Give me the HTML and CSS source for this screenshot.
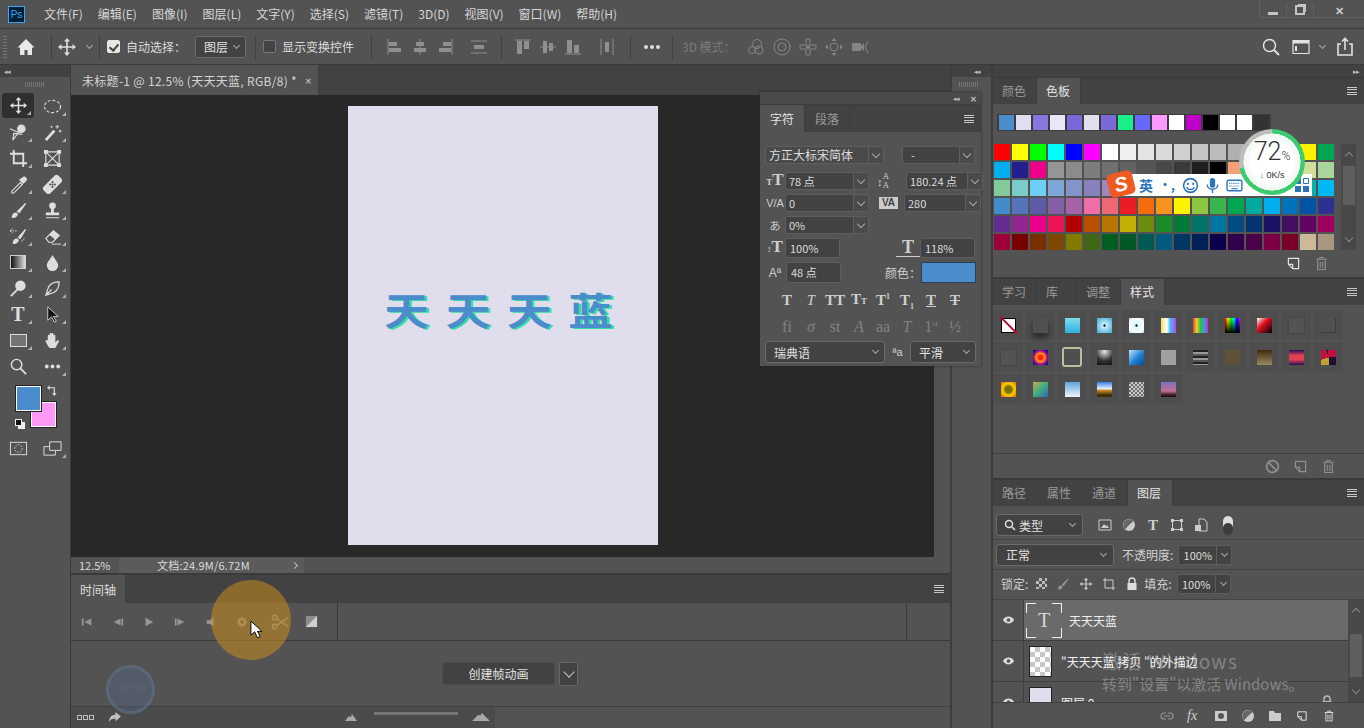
FILE: index.html
```html
<!DOCTYPE html>
<html lang="zh-CN">
<head>
  <meta charset="UTF-8">
  <title>Photoshop</title>
  <link rel="stylesheet" href="styles.css">
</head>
<body>

<svg class="defs">
  <symbol id="move" viewBox="0 0 20 20"><path d="M10 3v14M3 10h14" fill="none" stroke="currentColor" stroke-width="1.6"/><path d="M10 1l3 3.5H7zM10 19l3-3.5H7zM1 10l3.5-3v6zM19 10l-3.5-3v6z" fill="currentColor"/></symbol>
  <symbol id="trash" viewBox="0 0 20 20"><path d="M4 5h12M8 5V3h4v2M5.500 5v12h9V5M8.500 8v7M11.500 8v7" fill="none" stroke="currentColor" stroke-width="1.300"/></symbol>
  <symbol id="newdoc" viewBox="0 0 20 20"><path d="M4 4h12v12H9l-5-5zM4 11h5v5" fill="none" stroke="currentColor" stroke-width="1.400"/></symbol>
  <symbol id="brush" viewBox="0 0 20 20"><path d="M8 11L17 2l1 1-7 10z" fill="currentColor"/><path d="M3 18c0-3 1-6 4-6 2 0 3 2 2 3-1 2-3 3-6 3z" fill="currentColor"/></symbol>
  <symbol id="dots" viewBox="0 0 20 20"><circle cx="4" cy="10" r="2" fill="currentColor"/><circle cx="10" cy="10" r="2" fill="currentColor"/><circle cx="16" cy="10" r="2" fill="currentColor"/></symbol>
</svg>

<div class="app">

  <!-- 菜单栏 -->
  <header class="menubar">
    <div class="ps-logo">Ps</div>
    <nav class="menu">
      <span>文件(F)</span><span>编辑(E)</span><span>图像(I)</span><span>图层(L)</span><span>文字(Y)</span><span>选择(S)</span><span>滤镜(T)</span><span>3D(D)</span><span>视图(V)</span><span>窗口(W)</span><span>帮助(H)</span>
    </nav>
    <div class="winbtns">
      <span class="winbtn"><i class="win-min"></i></span>
      <span class="winbtn"><i class="win-max"></i></span>
      <span class="winbtn win-close">✕</span>
    </div>
  </header>

  <!-- 选项栏 -->
  <div class="optbar">
    <div class="grip-v"></div>
    <div class="opt opt-home">
      <svg class="ic" viewBox="0 0 20 20"><path d="M10 2L1.500 10.500H4V18h4.500v-5h3v5H16v-7.500h2.500z" fill="#e8e8e8"/></svg>
    </div>
    <div class="opt opt-move">
      <svg class="ic"><use href="#move"/></svg>
      <i class="chev"></i>
    </div>
    <div class="opt opt-auto">
      <i class="check on"></i>
      <span>自动选择：</span>
      <span class="sel sel-layer">图层<i class="chev"></i></span>
    </div>
    <div class="opt opt-transform">
      <i class="check"></i>
      <span>显示变换控件</span>
    </div>
    <div class="opt opt-align">
      <svg class="ic dim" viewBox="0 0 20 20"><path d="M3 2v16" stroke="currentColor"/><path d="M4 5h8v4H4zM4 11h12v4H4z" fill="currentColor"/></svg>
      <svg class="ic dim" viewBox="0 0 20 20"><path d="M10 2v16" stroke="currentColor"/><path d="M6 5h8v4H6zM4 11h12v4H4z" fill="currentColor"/></svg>
      <svg class="ic dim" viewBox="0 0 20 20"><path d="M17 2v16" stroke="currentColor"/><path d="M8 5h8v4H8zM4 11h12v4H4z" fill="currentColor"/></svg>
      <svg class="ic dim push" viewBox="0 0 20 20"><path d="M2 4h16M2 16h16" stroke="currentColor"/><path d="M5 8h10v4H5z" fill="currentColor"/></svg>
    </div>
    <div class="opt opt-align2">
      <svg class="ic dim" viewBox="0 0 20 20"><path d="M2 3h16" stroke="currentColor"/><path d="M4 4h5v13H4zM11 4h5v8h-5z" fill="currentColor"/></svg>
      <svg class="ic dim" viewBox="0 0 20 20"><path d="M2 10h16" stroke="currentColor"/><path d="M5 4h4v12H5zM11 6h4v8h-4z" fill="currentColor"/></svg>
      <svg class="ic dim" viewBox="0 0 20 20"><path d="M2 17h16" stroke="currentColor"/><path d="M4 3h5v13H4zM11 8h5v8h-5z" fill="currentColor"/></svg>
      <svg class="ic dim push" viewBox="0 0 20 20"><path d="M4 2v16M16 2v16" stroke="currentColor"/><path d="M8 5h4v10H8z" fill="currentColor"/></svg>
    </div>
    <div class="opt opt-more">
      <svg class="ic"><use href="#dots"/></svg>
    </div>
    <div class="opt opt-3d">
      <span>3D 模式：</span>
      <svg class="ic" viewBox="0 0 20 20"><circle cx="11" cy="7" r="4.500" fill="none" stroke="currentColor"/><circle cx="6" cy="13" r="3.500" fill="none" stroke="currentColor"/><circle cx="13" cy="13" r="4" fill="none" stroke="currentColor"/></svg>
      <svg class="ic" viewBox="0 0 20 20"><circle cx="10" cy="10" r="8" fill="none" stroke="currentColor"/><circle cx="10" cy="10" r="4" fill="none" stroke="currentColor"/></svg>
      <svg class="ic" viewBox="0 0 20 20"><path d="M8 2h4v6h6v4h-6v6H8v-6H2V8h6z" fill="none" stroke="currentColor"/><circle cx="10" cy="10" r="2" fill="currentColor"/></svg>
      <svg class="ic" viewBox="0 0 20 20"><circle cx="10" cy="10" r="4" fill="none" stroke="currentColor"/><path d="M10 1l2.500 3h-5zM10 19l2.500-3h-5zM1 10l3-2.500v5zM19 10l-3-2.500v5z" fill="currentColor"/></svg>
      <svg class="ic" viewBox="0 0 20 20"><path d="M2 6h9v8H2zM11 9l3-3v8l-3-3" fill="currentColor"/><path d="M18 4l-3 6 3 6" fill="none" stroke="currentColor"/></svg>
    </div>
    <div class="opt-right">
      <svg class="ic lit" viewBox="0 0 20 20"><circle cx="8.500" cy="8.500" r="6" fill="none" stroke="currentColor" stroke-width="1.500"/><path d="M13 13l5 5" stroke="currentColor" stroke-width="2"/></svg>
      <svg class="ic lit" viewBox="0 0 20 20"><path d="M2 3.500h16v13H2z" fill="none" stroke="currentColor" stroke-width="1.200"/><path d="M2 3.500h16v3H2zM4 9h2v5H4z" fill="currentColor"/></svg>
      <i class="chev"></i>
      <svg class="ic lit" viewBox="0 0 20 20"><path d="M6 7H3v11h14V7h-3M10 13V2M7 4.500l3-3 3 3" fill="none" stroke="currentColor" stroke-width="1.600"/></svg>
    </div>
  </div>

  <div class="workspace">

    <!-- 工具栏 -->
    <aside class="toolbar">
      <div class="dock-head"><span class="arrows">◂◂</span></div>
      <div class="grip-h"></div>
      <div class="tools">
        <div class="tool sel-tool fly"><svg class="ic"><use href="#move"/></svg></div>
        <div class="tool fly"><svg class="ic" viewBox="0 0 20 20"><ellipse cx="10" cy="10" rx="8.500" ry="6.500" fill="none" stroke="currentColor" stroke-width="1.200" stroke-dasharray="3 2"/></svg></div>
        <div class="tool fly"><svg class="ic" viewBox="0 0 20 20"><path d="M1 6l9 4-6 8 1-7 9 1" fill="none" stroke="currentColor" stroke-width="1.200"/><circle cx="13" cy="6" r="4.500" fill="currentColor"/></svg></div>
        <div class="tool fly"><svg class="ic" viewBox="0 0 20 20"><path d="M3 18L12 8" stroke="currentColor" stroke-width="3"/><path d="M15 2v4M13 4h4M18 7v3M16.500 8.500h3M9 3v2M8 4h2" stroke="currentColor"/></svg></div>
        <div class="tool fly"><svg class="ic" viewBox="0 0 20 20"><path d="M5 1v14h14M1 5h14v14" fill="none" stroke="currentColor" stroke-width="2"/></svg></div>
        <div class="tool"><svg class="ic" viewBox="0 0 20 20"><path d="M3 3h14v14H3zM3 3l14 14M17 3L3 17" fill="none" stroke="currentColor" stroke-width="1.200"/><path d="M1 1h4v4H1zM15 1h4v4h-4zM1 15h4v4H1zM15 15h4v4h-4z" fill="currentColor"/></svg></div>
        <div class="tool fly"><svg class="ic" viewBox="0 0 20 20"><path d="M3 17l9-9 2 2-9 9H3z" fill="none" stroke="currentColor" stroke-width="1.200"/><path d="M10.500 5l4.500 4.500 3-3a2.500 2.500 0 0 0-4-4z" fill="currentColor"/></svg></div>
        <div class="tool fly"><svg class="ic" viewBox="0 0 20 20"><rect x="5" y="-1" width="10" height="22" rx="3" transform="rotate(45 10 10)" fill="currentColor"/><g fill="#555"><circle cx="10" cy="10" r="1.100"/><circle cx="7.500" cy="10" r="1.100"/><circle cx="12.500" cy="10" r="1.100"/><circle cx="10" cy="7.500" r="1.100"/><circle cx="10" cy="12.500" r="1.100"/></g></svg></div>
        <div class="tool fly"><svg class="ic"><use href="#brush"/></svg></div>
        <div class="tool fly"><svg class="ic" viewBox="0 0 20 20"><circle cx="10" cy="5" r="3.500" fill="currentColor"/><path d="M8.500 7h3v5h-3zM3 12h14v3H3zM3 17h14v1.200H3z" fill="currentColor"/></svg></div>
        <div class="tool fly"><svg class="ic" viewBox="0 0 20 20"><path d="M9 11l8-9 1 1-6 10z" fill="currentColor"/><path d="M4 18c0-3 1-6 4-6 2 0 3 2 2 3-1 2-3 3-6 3z" fill="currentColor"/><path d="M8 4H1l3-2.500M1 4l3 2.500M13 15a5 5 0 0 0 3-3" fill="none" stroke="currentColor" stroke-dasharray="1.500 1"/></svg></div>
        <div class="tool fly"><svg class="ic" viewBox="0 0 20 20"><path d="M3 12l8-8 6 5-7 7H6z" fill="none" stroke="currentColor" stroke-width="1.200"/><path d="M11 4l6 5-4 4-6-5zM9 18h10" fill="currentColor" stroke="currentColor"/></svg></div>
        <div class="tool fly"><i class="grad"></i></div>
        <div class="tool fly"><svg class="ic" viewBox="0 0 20 20"><path d="M10 2c3 5 6 8 6 11a6 6 0 0 1-12 0c0-3 3-6 6-11z" fill="currentColor"/></svg></div>
        <div class="tool fly"><svg class="ic" viewBox="0 0 20 20"><circle cx="12" cy="7" r="5.500" fill="currentColor"/><path d="M9 11l-7 7" stroke="currentColor" stroke-width="2"/></svg></div>
        <div class="tool fly"><svg class="ic" viewBox="0 0 20 20"><path d="M17 3c-5 0-9 2-11 5l-3 9 9-3c3-2 5-6 5-11zM3 17l6-6" fill="none" stroke="currentColor" stroke-width="1.300"/></svg></div>
        <div class="tool fly tool-t">T</div>
        <div class="tool fly"><svg class="ic" viewBox="0 0 20 20"><path d="M5 2v14l4-3.500 3 5.500 2-1-3-5h5z" fill="#111" stroke="#ccc"/></svg></div>
        <div class="tool fly"><i class="rect-ic"></i></div>
        <div class="tool fly"><svg class="ic" viewBox="0 0 20 20"><path d="M5 10V5a1 1 0 0 1 2 0v4V3a1 1 0 0 1 2 0v6V3a1 1 0 0 1 2 0v6V5a1 1 0 0 1 2 0v7l2-2a1 1 0 0 1 1.500 1.500L13 18H8C6 18 5 15 3 11.500a1 1 0 0 1 2-1.500z" fill="currentColor"/></svg></div>
        <div class="tool"><svg class="ic" viewBox="0 0 20 20"><circle cx="8" cy="8" r="5.500" fill="none" stroke="currentColor" stroke-width="1.500"/><path d="M12 12l6 6" stroke="currentColor" stroke-width="2"/></svg></div>
        <div class="tool fly"><svg class="ic"><use href="#dots"/></svg></div>
      </div>
      <div class="colors">
        <i class="col-fg"></i>
        <i class="col-bg"></i>
        <svg class="col-swap" viewBox="0 0 12 12"><path d="M1 3h7v7" fill="none" stroke="#ddd" stroke-width="1.300"/><path d="M0 3l3-2.500v5zM8 12l-2.500-3h5z" fill="#ddd"/></svg>
        <i class="col-def"></i>
      </div>
      <div class="tool-bottom">
        <div class="tool"><svg class="ic" viewBox="0 0 20 20"><rect x="1.500" y="3.500" width="17" height="13" fill="none" stroke="currentColor"/><circle cx="10" cy="10" r="4" fill="none" stroke="currentColor" stroke-dasharray="1.500 1.500"/></svg></div>
        <div class="tool fly"><svg class="ic" viewBox="0 0 20 20"><path d="M7 3h12v9H7zM1 8h6M1 8v9h12v-5" fill="none" stroke="currentColor"/></svg></div>
      </div>
    </aside>

    <!-- 文档区 -->
    <main class="docarea">
      <div class="tabbar">
        <div class="doctab">未标题-1 @ 12.5% (天天天蓝, RGB/8) * <span class="tab-x">✕</span></div>
      </div>
      <div class="canvas-row">
        <div class="canvas">
          <div class="paper"><div class="art">天天天蓝</div></div>
        </div>
      </div>
      <div class="statusbar">
        <span class="zoomval">12.5%</span>
        <div class="docinfo"><span>文档:24.9M/6.72M</span><i class="chev-r"></i></div>
      </div>
      <section class="timeline">
        <div class="tl-head"><span class="tl-tab">时间轴</span><i class="hamb"></i></div>
        <div class="tl-controls">
          <svg class="tl-ic" viewBox="0 0 14 14"><path d="M1 3h2v8H1zM12 3v8L4 7z" fill="currentColor"/></svg>
          <svg class="tl-ic" viewBox="0 0 14 14"><path d="M10 3v8L2 7zM11 3h2v8h-2z" fill="currentColor"/></svg>
          <svg class="tl-ic" viewBox="0 0 14 14"><path d="M3 2v10l9-5z" fill="currentColor"/></svg>
          <svg class="tl-ic" viewBox="0 0 14 14"><path d="M1 3h2v8H1zM4 3v8l8-4z" fill="currentColor"/></svg>
          <svg class="tl-ic" viewBox="0 0 14 14"><path d="M2 5h3l5-3v10l-5-3H2z" fill="currentColor"/></svg>
          <svg class="tl-ic" viewBox="0 0 14 14"><circle cx="7" cy="7" r="3.500" fill="none" stroke="currentColor" stroke-width="2.500"/><path d="M7 1v2M7 11v2M1 7h2M11 7h2M3 3l1.500 1.500M9.500 9.500L11 11M11 3L9.500 4.500M4.500 9.500L3 11" stroke="currentColor" stroke-width="1.400"/></svg>
          <i class="tl-sep"></i>
          <svg class="tl-ic tl-cut" viewBox="0 0 20 20"><circle cx="4" cy="5" r="2.500" fill="none" stroke="currentColor" stroke-width="1.500"/><circle cx="4" cy="15" r="2.500" fill="none" stroke="currentColor" stroke-width="1.500"/><path d="M6 6l13 9M6 14l13-9" stroke="currentColor" stroke-width="1.500"/></svg>
          <svg class="tl-ic tl-trans" viewBox="0 0 14 14"><path d="M1 1h12v12H1z" fill="#8e8e8e"/><path d="M13 1v12H1z" fill="#d0d0d0"/></svg>
          <i class="tl-sep tl-sep-b"></i>
          <i class="tl-sep tl-sep-c"></i>
        </div>
        <div class="tl-body">
          <span class="btn-anim">创建帧动画</span>
          <span class="btn-drop"><i class="chev chev-big"></i></span>
        </div>
        <div class="tl-foot">
          <span class="frames"><i></i><i></i><i></i></span>
          <svg class="tl-arrow" viewBox="0 0 14 12"><path d="M8 0l6 5-6 5V7C5 7 2 8 1 11 1 7 3 3 8 3z" fill="#c0c0c0"/></svg>
          <div class="tl-zoom">
            <svg class="mtn-s" viewBox="0 0 12 7"><path d="M0 7l4-5 2 1 1-3 5 7z" fill="#a8a8a8"/></svg>
            <i class="slider"></i>
            <svg class="mtn-l" viewBox="0 0 20 9"><path d="M0 9l7-7 2 1 2-3 9 9z" fill="#a8a8a8"/></svg>
          </div>
        </div>
      </section>
    </main>

    <!-- 折叠的面板条 -->
    <div class="dock-strip">
      <div class="dock-head"><span class="arrows">◂◂</span></div>
      <div class="grip-h grip-strip"></div>
    </div>

    <!-- 右侧面板 -->
    <aside class="panels">
      <div class="dock-head dock-head-r"><span class="arrows">▸▸</span></div>

      <section class="panel panel-swatch">
        <div class="ptabs">
          <span class="ptab">颜色</span><span class="ptab on">色板</span><i class="hamb"></i>
        </div>
        <div class="recent" id="recent"></div>
        <div class="swatch-wrap">
          <div class="swatches" id="swatches"></div>
          <div class="vscroll"><i class="up"></i><b></b><i class="dn"></i></div>
        </div>
        <div class="pfoot pfoot-swatch">
          <svg class="ic lit"><use href="#newdoc"/></svg>
          <svg class="ic dim"><use href="#trash"/></svg>
        </div>
      </section>

      <section class="panel panel-style">
        <div class="ptabs">
          <span class="ptab">学习</span><span class="ptab ptab-one">库</span><span class="ptab">调整</span><span class="ptab on">样式</span><i class="hamb"></i>
        </div>
        <div class="styles">
          <div class="cell"><i class="thumb t1"></i></div>
          <div class="cell"><i class="thumb t2"></i></div>
          <div class="cell"><i class="thumb t3"></i></div>
          <div class="cell"><i class="thumb t4"></i></div>
          <div class="cell"><i class="thumb t5"></i></div>
          <div class="cell"><i class="thumb t6"></i></div>
          <div class="cell"><i class="thumb t7"></i></div>
          <div class="cell"><i class="thumb t8"></i></div>
          <div class="cell"><i class="thumb t9"></i></div>
          <div class="cell"><i class="thumb t10"></i></div>
          <div class="cell"><i class="thumb t11"></i></div>
          <div class="cell"><i class="thumb t10"></i></div>
          <div class="cell"><i class="thumb t12"></i></div>
          <div class="cell"><i class="thumb t13"></i></div>
          <div class="cell"><i class="thumb t14"></i></div>
          <div class="cell"><i class="thumb t15"></i></div>
          <div class="cell"><i class="thumb t16"></i></div>
          <div class="cell"><i class="thumb t17"></i></div>
          <div class="cell"><i class="thumb t18"></i></div>
          <div class="cell"><i class="thumb t19"></i></div>
          <div class="cell"><i class="thumb t20"></i></div>
          <div class="cell"><i class="thumb t21"></i></div>
          <div class="cell"><i class="thumb t22"></i></div>
          <div class="cell"><i class="thumb t23"></i></div>
          <div class="cell"><i class="thumb t24"></i></div>
          <div class="cell"><i class="thumb t25"></i></div>
          <div class="cell"><i class="thumb t26"></i></div>
          <div class="cell"><i class="thumb t27"></i></div>
        </div>
        <div class="pfoot pfoot-style">
          <svg class="ic dim" viewBox="0 0 20 20"><circle cx="10" cy="10" r="7" fill="none" stroke="currentColor" stroke-width="2"/><path d="M5 5l10 10" stroke="currentColor" stroke-width="2"/></svg>
          <svg class="ic dim"><use href="#newdoc"/></svg>
          <svg class="ic dim"><use href="#trash"/></svg>
        </div>
      </section>

      <section class="panel panel-layers">
        <div class="ptabs">
          <span class="ptab">路径</span><span class="ptab">属性</span><span class="ptab">通道</span><span class="ptab on">图层</span><i class="hamb"></i>
        </div>
        <div class="lrow lrow-filter">
          <span class="sel sel-filter">
            <svg class="ic12" viewBox="0 0 12 12"><circle cx="5" cy="5" r="3.500" fill="none" stroke="#ddd" stroke-width="1.500"/><path d="M8 8l3 3" stroke="#ddd" stroke-width="1.600"/></svg>类型<i class="chev"></i>
          </span>
          <div class="filter-icons">
            <svg class="ic14" viewBox="0 0 14 14"><path d="M1 2h12v10H1z" fill="none" stroke="#ccc"/><path d="M3 10l3-4 2 2 1-1 2 3z" fill="#ccc"/></svg>
            <svg class="ic14" viewBox="0 0 14 14"><circle cx="7" cy="7" r="6" fill="#ccc"/><path d="M7 7l4.500-4A6 6 0 0 0 3 11.500z" fill="#666"/></svg>
            <span class="filter-t">T</span>
            <svg class="ic14" viewBox="0 0 14 14"><path d="M2.500 2.500h9v9h-9z" fill="none" stroke="#ccc"/><path d="M1 1h3v3H1zM10 1h3v3h-3zM1 10h3v3H1zM10 10h3v3h-3z" fill="#ccc"/></svg>
            <svg class="ic14" viewBox="0 0 14 14"><path d="M5 1h5l3 3v9H5z" fill="none" stroke="#ccc"/><path d="M1 7h6v6H1z" fill="#ccc"/></svg>
            <i class="toggle"></i>
          </div>
        </div>
        <div class="lrow lrow-blend">
          <span class="sel sel-blend">正常<i class="chev"></i></span>
          <span class="lab">不透明度:</span>
          <span class="combo"><b>100%</b><i class="chev"></i></span>
        </div>
        <div class="lrow lrow-lock">
          <span class="lab">锁定:</span>
          <div class="lock-icons">
            <i class="lock-check"></i>
            <svg class="ic14 faded"><use href="#brush"/></svg>
            <svg class="ic14"><use href="#move"/></svg>
            <svg class="ic14" viewBox="0 0 14 14"><path d="M3 1v10h10M1 3h10v10" fill="none" stroke="#ccc"/></svg>
            <svg class="ic14" viewBox="0 0 14 14"><path d="M4 6V4a3 3 0 0 1 6 0v2" fill="none" stroke="#ddd" stroke-width="1.400"/><path d="M2.500 6h9v7h-9z" fill="#ddd"/></svg>
          </div>
          <span class="lab">填充:</span>
          <span class="combo"><b>100%</b><i class="chev"></i></span>
        </div>
        <div class="layers">
          <div class="layer-list">
            <div class="layer layer-on">
              <svg class="eye" viewBox="0 0 14 10"><path d="M1 5c3-5 9-5 12 0-3 5-9 5-12 0z" fill="#ddd"/><circle cx="7" cy="5" r="2" fill="#555"/></svg>
              <div class="lmain">
                <div class="thumb-t">T</div>
                <span class="lname">天天天蓝</span>
              </div>
            </div>
            <div class="layer">
              <svg class="eye" viewBox="0 0 14 10"><path d="M1 5c3-5 9-5 12 0-3 5-9 5-12 0z" fill="#ddd"/><circle cx="7" cy="5" r="2" fill="#555"/></svg>
              <div class="lmain">
                <div class="thumb-c"></div>
                <span class="lname lname-b">"天天天蓝 拷贝 "的外描边</span>
              </div>
            </div>
            <div class="layer">
              <svg class="eye" viewBox="0 0 14 10"><path d="M1 5c3-5 9-5 12 0-3 5-9 5-12 0z" fill="#ddd"/><circle cx="7" cy="5" r="2" fill="#555"/></svg>
              <div class="lmain">
                <div class="thumb-p"></div>
                <span class="lname lname-b">图层 0</span>
                <svg class="ic14 llock" viewBox="0 0 14 14"><path d="M4 6V4a3 3 0 0 1 6 0v2" fill="none" stroke="#bbb" stroke-width="1.400"/><path d="M2.500 6h9v7h-9z" fill="#bbb"/></svg>
              </div>
            </div>
          </div>
          <div class="vscroll vscroll-l"><i class="up"></i><b></b><i class="dn"></i></div>
        </div>
        <div class="lfoot">
          <svg class="ic14 faded" viewBox="0 0 14 14"><path d="M6 4H4a3 3 0 0 0 0 6h2M8 4h2a3 3 0 0 1 0 6H8M4 7h6" fill="none" stroke="#ccc" stroke-width="1.200"/></svg>
          <span class="fx">fx</span>
          <svg class="ic14" viewBox="0 0 14 14"><path d="M1 2h12v10H1z" fill="#ccc"/><circle cx="7" cy="7" r="3" fill="#555"/></svg>
          <svg class="ic14" viewBox="0 0 14 14"><circle cx="7" cy="7" r="6" fill="#ccc"/><path d="M7 7l4.500-4A6 6 0 0 0 3 11.500z" fill="#666"/></svg>
          <svg class="ic14" viewBox="0 0 14 14"><path d="M1 2h5l1 2h6v8H1z" fill="#ccc"/></svg>
          <svg class="ic14 lit"><use href="#newdoc"/></svg>
          <svg class="ic14 lit"><use href="#trash"/></svg>
        </div>
      </section>
    </aside>
  </div>

  <!-- 浮动的字符面板 -->
  <div class="charpanel">
    <div class="cp-head"><span class="arrows">◂◂</span><span class="cp-x">✕</span></div>
    <div class="ptabs cp-tabs">
      <span class="ptab on">字符</span><span class="ptab">段落</span><i class="hamb"></i>
    </div>
    <div class="cp-body">
      <div class="cp-row cp-r1">
        <span class="cf w118">方正大标宋简体<em></em></span>
        <span class="cf w72 dark">-<em></em></span>
      </div>
      <div class="cp-row cp-r2">
        <span class="ci ci-tt"><small>T</small>T</span>
        <span class="cf w84">78 点<em></em></span>
        <span class="ci ci-lead"><b>↕</b><span>A<br>A</span></span>
        <span class="cf w77">180.24 点<em></em></span>
      </div>
      <div class="cp-row cp-r3">
        <span class="ci ci-va">V/A</span>
        <span class="cf w84">0<em></em></span>
        <span class="ci ci-vab">VA</span>
        <span class="cf w77">280<em></em></span>
      </div>
      <div class="cp-row cp-r4">
        <span class="ci ci-jp">あ</span>
        <span class="cf w84">0%<em></em></span>
      </div>
      <div class="cp-row cp-r5">
        <span class="ci ci-tt"><small>↕</small>T</span>
        <span class="cf w55">100%</span>
        <span class="ci ci-wide">T</span>
        <span class="cf w55">118%</span>
      </div>
      <div class="cp-row cp-r6">
        <span class="ci ci-base">Aª</span>
        <span class="cf w55">48 点</span>
        <span class="cp-lab">颜色：</span>
        <i class="cp-color"></i>
      </div>
      <div class="cp-types">
        <span class="b">T</span><span class="i">T</span><span class="b">TT</span><span class="b">T<small>T</small></span><span class="b">T<sup>1</sup></span><span class="b">T<sub>1</sub></span><span class="b u">T</span><span class="b s">T</span>
      </div>
      <div class="cp-types cp-lig">
        <span>fi</span><span class="i">σ</span><span>st</span><span class="i">A</span><span>aa</span><span class="i">T</span><span>1<sup>st</sup></span><span>½</span>
      </div>
      <div class="cp-row cp-r9">
        <span class="sel sel-lang">瑞典语<i class="chev"></i></span>
        <span class="cp-aa">ªa</span>
        <span class="sel sel-aa">平滑<i class="chev"></i></span>
      </div>
    </div>
  </div>

  <!-- 搜狗输入法和网速浮窗 -->
  <div class="ime">
    <span class="ime-s">S</span>
    <span class="ime-t">英</span>
    <span class="ime-t ime-p">•,</span>
    <svg class="ime-ic" viewBox="0 0 16 16"><circle cx="8" cy="8" r="6.500" fill="none" stroke="#2b74b8" stroke-width="1.500"/><circle cx="5.500" cy="6.500" r="1" fill="#2b74b8"/><circle cx="10.500" cy="6.500" r="1" fill="#2b74b8"/><path d="M4.500 9.500c1 3 6 3 7 0" fill="none" stroke="#2b74b8" stroke-width="1.300"/></svg>
    <svg class="ime-ic" viewBox="0 0 16 16"><rect x="5.500" y="1" width="5" height="9" rx="2.500" fill="#2b74b8"/><path d="M3 7c0 6 10 6 10 0M8 12v3" fill="none" stroke="#2b74b8" stroke-width="1.300"/></svg>
    <svg class="ime-ic" viewBox="0 0 16 16"><rect x="1" y="3" width="14" height="10" rx="1.500" fill="none" stroke="#2b74b8" stroke-width="1.300"/><path d="M3 6h10M3 8.500h10" stroke="#2b74b8" stroke-dasharray="1 1"/><path d="M5 11h6" stroke="#2b74b8"/></svg>
    <svg class="ime-grid" viewBox="0 0 14 14"><path d="M0 0h6v6H0zM0 8h6v6H0zM8 8h6v6H8z" fill="#2b74b8"/><path d="M8.500.5h5v5h-5z" fill="none" stroke="#2b74b8"/></svg>
  </div>
  <div class="speed">
    <div class="speed-pct">72<small>%</small></div>
    <div class="speed-net"><b>↓</b> 0K/s</div>
  </div>

  <!-- 录屏光标和计时 -->
  <div class="click-spot"></div>
  <svg class="cursor" viewBox="0 0 14 20"><path d="M1 1v15l4-3.500L8 19l3-1.500-3-5.500h5z" fill="#fff" stroke="#000"/></svg>
  <div class="rec-time">02:58</div>

  <div class="watermark">
    <div class="wm-a">激活 Windows</div>
    <div class="wm-b">转到"设置"以激活 Windows。</div>
  </div>
</div>

<script>
  const recent = ["#4a8ccc","#e0def0","#8677e0","#e8e6f8","#7868d8","#e2e0ee","#7a6ad8","#1af08a","#6868ff","#ff99ff","#ffffff","#c000c8","#000000","#ffffff","#ffffff","#333333"];
  const colors = [
    "#ff0000","#ffff00","#00ff00","#00ffff","#0000ff","#ff00ff","#ffffff","#efefef","#e3e3e3","#dadada","#d0d0d0","#c6c6c6","#bcbcbc","#b0b0b0","#a4a4a4","#9a9a9a","#f4f0d0","#fff200","#00a651",
    "#00aeef","#21208c","#ec008c","#959595","#8b8b8b","#7d7d7d","#707070","#636363","#555555","#484848","#3a3a3a","#1f1f1f","#000000","#f4a07a","#fbad82","#fdc68c","#fff799","#cfe09a","#a8d59c",
    "#82ca9c","#7accc8","#6dcff6","#7da7d8","#8493ca","#8781bd","#a186be","#bc8cbf","#f49ac2","#f5989d","#f9ad81","#fdc68a","#fff799","#c4df9b","#a3d39c","#82ca9d","#7bcdc9","#00b5b0","#00b9f2",
    "#438ccb","#5574b9","#5e5ca7","#855fa8","#a763a8","#ef6ea8","#ef6674","#ed1c24","#f26c0d","#f7941d","#fff200","#8dc63f","#39b54a","#00a651","#00a99d","#00aeef","#0072bc","#0054a6","#2e3192",
    "#662d91","#92278f","#ec008c","#ed145b","#b20000","#b45000","#ba7500","#c4b000","#6e8b10","#1a8a2a","#007a36","#00746b","#0076a3","#004b80","#003471","#1b1464","#440e62","#630460","#9e005d",
    "#9e0039","#790000","#7b2e00","#7d4900","#827b00","#406618","#005e20","#005826","#005952","#005b7f","#003663","#002157","#0d004c","#32004b","#4b0049","#7b0046","#7a0026","#cdb99a","#a89780"
  ];

  function fill(id, list) {
    const box = document.getElementById(id);
    list.forEach(c => {
      const el = document.createElement("i");
      el.style.background = c;
      box.appendChild(el);
    });
  }

  fill("recent", recent);
  fill("swatches", colors);
</script>

</body>
</html>
```

FILE: styles.css
```css
* {
  box-sizing: border-box;
}

html, body {
  margin: 0;
  height: 100%;
  overflow: hidden;
}

body {
  font-family: "Noto Sans CJK SC", "Noto Sans", sans-serif;
  font-size: 12px;
  color: #dcdcdc;
  background: #535353;
}

i, em {
  display: block;
  font-style: normal;
}

.defs {
  display: none;
}

.app {
  position: relative;
  width: 1364px;
  height: 728px;
  overflow: hidden;
}

.ic {
  width: 20px;
  height: 20px;
  flex: none;
  color: #dedede;
}

.ic12 {
  width: 12px;
  height: 12px;
  flex: none;
}

.ic14 {
  width: 14px;
  height: 14px;
  flex: none;
  color: #cfcfcf;
}

.dim {
  color: #8f8f8f;
}

.lit {
  color: #e2e2e2;
}

.faded {
  opacity: 0.55;
}

.chev {
  width: 5px;
  height: 5px;
  flex: none;
  border-right: 1px solid #a8a8a8;
  border-bottom: 1px solid #a8a8a8;
  transform: rotate(45deg);
}

/* menu */
.menubar {
  display: flex;
  align-items: center;
  height: 29px;
  padding-left: 8px;
  border-bottom: 1px solid #3a3a3a;
}

.ps-logo {
  width: 17px;
  height: 17px;
  margin-right: 19px;
  border: 1px solid #31a8ff;
  background: #001e36;
  color: #31a8ff;
  font: 10px/15px "Liberation Sans", sans-serif;
  text-align: center;
}

.menu {
  display: flex;
  gap: 15px;
  color: #d6d6d6;
  line-height: 28px;
}

.winbtns {
  display: flex;
  margin-left: auto;
  align-self: flex-start;
  height: 18px;
  padding-top: 3px;
  border: 1px solid #626262;
  border-top: 0;
  border-right: 0;
  border-radius: 0 0 0 3px;
}

.winbtn {
  display: flex;
  align-items: center;
  justify-content: center;
  width: 27px;
  border-right: 1px solid #626262;
}

.winbtn:last-child {
  width: 50px;
  border-right: 0;
}

.win-min {
  width: 10px;
  height: 3px;
  margin-top: 6px;
  background: #c4c4c4;
}

.win-max {
  width: 10px;
  height: 10px;
  border: 2px solid #c4c4c4;
  box-shadow: 2px -2px 0 -1px #c4c4c4;
}

.win-close {
  color: #c8c8c8;
  font-size: 11px;
  font-weight: bold;
}

/* options */
.optbar {
  display: flex;
  align-items: center;
  height: 36px;
  padding-left: 3px;
  border-bottom: 1px solid #3a3a3a;
}

.grip-v {
  width: 4px;
  height: 22px;
  background: repeating-linear-gradient(#777 0 1px, transparent 1px 3px);
}

.opt {
  display: flex;
  align-items: center;
  height: 24px;
  border-right: 1px solid #414141;
}

.opt-home {
  width: 45px;
  padding-left: 9px;
}

.opt-move {
  width: 48px;
  padding-left: 5px;
  gap: 10px;
}

.opt-move .chev {
  margin-top: -3px;
}

.opt-auto {
  width: 156px;
  padding-left: 7px;
}

.check {
  width: 13px;
  height: 13px;
  flex: none;
  border: 1px solid #777;
  border-radius: 2px;
  background: #434343;
  margin-right: 6px;
}

.check.on {
  position: relative;
  background: #e6e6e6;
  border-color: #e6e6e6;
}

.check.on::after {
  content: "";
  position: absolute;
  left: 3px;
  top: 1px;
  width: 4px;
  height: 7px;
  border-right: 2px solid #444;
  border-bottom: 2px solid #444;
  transform: rotate(40deg);
}

.sel {
  display: flex;
  align-items: center;
  justify-content: space-between;
  height: 22px;
  padding: 0 6px 0 8px;
  border: 1px solid #6a6a6a;
  border-radius: 3px;
  background: #424242;
  color: #e0e0e0;
}

.sel .chev {
  margin-top: -3px;
}

.sel-layer {
  width: 51px;
  margin-left: 9px;
}

.opt-transform {
  width: 116px;
  padding-left: 7px;
}

.opt-align {
  width: 130px;
  padding-left: 13px;
  gap: 5px;
}

.opt-align2 {
  width: 129px;
  padding-left: 11px;
  gap: 5px;
}

.push {
  margin-left: 9px;
}

.opt-more {
  width: 42px;
  padding-left: 11px;
}

.opt-3d {
  border: 0;
  padding-left: 9px;
  color: #7a7a7a;
  gap: 6px;
}

.opt-3d span {
  width: 58px;
}

.opt-3d .ic {
  color: #858585;
}

.opt-right {
  display: flex;
  align-items: center;
  margin-left: auto;
  padding-right: 9px;
}

.opt-right .ic + .ic {
  margin-left: 10px;
}

.opt-right .chev {
  margin: -3px 10px 0 9px;
}

/* workspace */
.workspace {
  display: grid;
  grid-template-columns: 71px 881px 41px 371px;
  height: 663px;
}

.dock-head {
  display: flex;
  align-items: center;
  height: 12px;
  padding-left: 4px;
  background: #424242;
}

.arrows {
  font-size: 7px;
  line-height: 12px;
  letter-spacing: -1px;
  color: #bdbdbd;
}

.grip-h {
  width: 20px;
  height: 5px;
  margin: 5px auto 6px;
  background: repeating-linear-gradient(90deg, #747474 0 1px, transparent 1px 2px);
}

/* toolbar */
.toolbar {
  border-right: 1px solid #3a3a3a;
}

.tools,
.tool-bottom {
  display: grid;
  grid-template-columns: 34px 34px;
  grid-auto-rows: 26px;
  padding-left: 1px;
}

.tool {
  position: relative;
  display: flex;
  align-items: center;
  justify-content: center;
  color: #dedede;
}

.tool .ic {
  width: 19px;
  height: 19px;
}

.fly::after {
  content: "";
  position: absolute;
  right: 3px;
  bottom: 3px;
  border-left: 4px solid transparent;
  border-bottom: 4px solid #b0b0b0;
}

.sel-tool {
  background: #2f2f2f;
  border-radius: 3px;
  margin: 0 1px 1px;
}

.grad {
  width: 16px;
  height: 14px;
  border: 1px solid #ccc;
  background: linear-gradient(90deg, #111, #ddd);
}

.rect-ic {
  width: 17px;
  height: 13px;
  border: 1px solid #ddd;
  background: #757575;
}

.tool-t {
  font: bold 20px "Liberation Serif", serif;
}

.colors {
  position: relative;
  height: 51px;
  margin-top: 6px;
}

.col-fg,
.col-bg {
  position: absolute;
  width: 25px;
  height: 25px;
  border: 1px solid #fff;
  box-shadow: 0 0 0 1px #222;
}

.col-fg {
  left: 16px;
  top: 1px;
  background: #4a8ccc;
  z-index: 1;
}

.col-bg {
  left: 31px;
  top: 17px;
  background: #ff99f5;
}

.col-swap {
  position: absolute;
  left: 47px;
  top: 0;
  width: 11px;
  height: 11px;
}

.col-def {
  position: absolute;
  left: 15px;
  top: 34px;
  width: 7px;
  height: 7px;
  background: #111;
  border: 1px solid #eee;
  box-shadow: 3px 3px 0 0 #eee;
}

.tool-bottom {
  margin-top: -1px;
}

/* document */
.docarea {
  display: flex;
  flex-direction: column;
  border-right: 2px solid #3d3d3d;
}

.tabbar {
  height: 30px;
  padding-top: 0;
  background: #424242;
}

.doctab {
  display: flex;
  align-items: center;
  width: 247px;
  height: 30px;
  padding-left: 11px;
  background: #535353;
  color: #d4d4d4;
  letter-spacing: 0.3px;
  white-space: pre;
}

.tab-x {
  margin-left: 5px;
  color: #b4b4b4;
  font-size: 8px;
  font-weight: bold;
}

.canvas-row {
  height: 462px;
  padding-right: 16px;
}

.canvas {
  display: flex;
  justify-content: center;
  height: 100%;
  padding-top: 11px;
  background: #282828;
}

.paper {
  display: flex;
  align-items: center;
  justify-content: center;
  width: 310px;
  height: 439px;
  background: #e0deed;
}

.art {
  margin: 0 0 34px 10px;
  transform: scaleX(1.18);
  font-size: 38px;
  line-height: 1;
  font-weight: 700;
  letter-spacing: 14px;
  white-space: nowrap;
  color: #4a8ccc;
  text-shadow: 2px 1px 0 #38dca0;
}

.statusbar {
  display: flex;
  align-items: center;
  height: 16px;
  padding-left: 8px;
  font-size: 11px;
}

.zoomval {
  width: 40px;
}

.docinfo {
  display: flex;
  align-items: center;
  justify-content: space-between;
  width: 185px;
  height: 15px;
  padding: 0 7px 0 38px;
  background: #5b5b5b;
  letter-spacing: 0.2px;
}

.chev-r {
  width: 5px;
  height: 5px;
  border-right: 1px solid #bbb;
  border-top: 1px solid #bbb;
  transform: rotate(45deg);
}

/* timeline */
.timeline {
  position: relative;
  flex: 1;
  display: flex;
  flex-direction: column;
  border-top: 2px solid #3a3a3a;
}

.hamb {
  width: 10px;
  height: 8px;
  margin-left: auto;
  flex: none;
  background: repeating-linear-gradient(#c8c8c8 0 1px, transparent 1px 2.34px);
}

.tl-head {
  display: flex;
  align-items: center;
  height: 28px;
  padding-right: 6px;
  background: #424242;
}

.tl-tab {
  display: flex;
  align-items: center;
  height: 100%;
  padding: 0 9px;
  background: #535353;
}

.tl-controls {
  position: relative;
  display: flex;
  align-items: center;
  height: 38px;
  padding-left: 10px;
  gap: 19px;
  border-bottom: 1px solid #3a3a3a;
  color: #969696;
}

.tl-ic {
  width: 12px;
  height: 12px;
  flex: none;
}

.tl-cut {
  width: 18px;
  height: 18px;
  margin-left: 1px;
}

.tl-trans {
  width: 13px;
  height: 13px;
  margin-left: -3px;
}

.tl-sep {
  width: 1px;
  height: 37px;
  margin: 0 -9px 0 -8px;
  background: #474747;
}

.tl-sep-b {
  margin-left: 0;
  background: #3a3a3a;
}

.tl-sep-c {
  margin-left: auto;
  margin-right: 43px;
  background: #3a3a3a;
}

.tl-body {
  display: flex;
  align-items: center;
  justify-content: center;
  gap: 4px;
  height: 65px;
  padding: 0 0 0 79px;
}

.btn-anim {
  display: block;
  width: 113px;
  height: 23px;
  margin-left: 292px;
  margin-right: 0;
  background: #424242;
  border: 1px solid #4d4d4d;
  border-radius: 3px;
  color: #e2e2e2;
  line-height: 21px;
  text-align: center;
}

.btn-drop {
  display: flex;
  align-items: center;
  justify-content: center;
  width: 19px;
  height: 24px;
  margin-right: auto;
  background: #424242;
  border: 1px solid #666;
  border-radius: 2px;
}

.chev-big {
  width: 8px;
  height: 8px;
  margin-top: -4px;
  border-color: #c6c6c6;
}

.tl-foot {
  display: flex;
  align-items: center;
  height: 22px;
  border-top: 1px solid #3f3f3f;
  background: linear-gradient(90deg, #4b4b4b 0 424px, #535353 424px);
  padding-left: 6px;
}

.frames {
  display: flex;
  gap: 1px;
}

.frames i {
  width: 5px;
  height: 5px;
  border: 1px solid #bbb;
}

.tl-arrow {
  width: 13px;
  height: 11px;
  margin-left: 14px;
}

.tl-zoom {
  display: flex;
  align-items: center;
  margin-left: 224px;
}

.mtn-s {
  width: 12px;
  height: 7px;
  margin-top: -1px;
}

.slider {
  width: 84px;
  height: 3px;
  margin: -9px 14px 0 17px;
  background: #757575;
}

.mtn-l {
  width: 18px;
  height: 8px;
  margin-top: -2px;
}

/* dock strip */
.dock-strip {
  border-right: 2px solid #3d3d3d;
}

.dock-strip .dock-head {
  padding-left: 22px;
}

.grip-strip {
  margin-left: 7px;
}

/* right panels */
.panels {
  display: flex;
  flex-direction: column;
}

.dock-head-r {
  justify-content: flex-end;
  padding-right: 5px;
}

.panel {
  flex: none;
  display: flex;
  flex-direction: column;
  border-bottom: 1px solid #3a3a3a;
}

.panel-swatch {
  height: 201px;
}

.panel-style {
  height: 201px;
}

.panel-layers {
  flex: 1;
  border-bottom: 0;
}

.ptabs {
  display: flex;
  align-items: center;
  flex: none;
  height: 27px;
  padding-right: 7px;
  background: #424242;
  border-top: 1px solid #3a3a3a;
}

.ptab {
  display: flex;
  align-items: center;
  height: 100%;
  padding: 0 10px 2px 9px;
  border-right: 1px solid #3d3d3d;
  color: #9a9a9a;
}

.panel-layers .ptab {
  padding-right: 11px;
}

.ptab.on {
  background: #535353;
  color: #e4e4e4;
}

.ptab-one {
  padding: 0 18px 2px 9px;
}

/* swatches */
.recent {
  display: flex;
  align-self: flex-start;
  margin: 10px 0 0 4px;
  padding: 1px 2px;
  background: #3c3c3c;
}

.recent i {
  width: 15px;
  height: 15px;
  margin-right: 2px;
}

.recent i:last-child {
  margin-right: 0;
}

.swatch-wrap {
  display: flex;
  margin-top: 13px;
  padding-left: 1px;
}

.swatches {
  display: grid;
  grid-template-columns: repeat(19, 16px);
  grid-auto-rows: 16px;
  gap: 2px;
  width: 340px;
}

.vscroll {
  display: flex;
  flex-direction: column;
  align-items: center;
  width: 15px;
  margin-left: 7px;
  background: #484848;
}

.vscroll b {
  width: 12px;
  flex: 1;
  margin: 7px 0 30px;
  background: #5f5f5f;
}

.vscroll .up,
.vscroll .dn {
  width: 6px;
  height: 6px;
  border-left: 1px solid #888;
  border-top: 1px solid #888;
  transform: rotate(45deg);
  margin-top: 9px;
}

.vscroll .dn {
  transform: rotate(225deg);
  margin: 0 0 9px;
}

.pfoot {
  display: flex;
  align-items: center;
  justify-content: flex-end;
  flex: 1;
}

.pfoot .ic {
  width: 17px;
  height: 17px;
}

.pfoot-swatch {
  gap: 11px;
  padding-right: 34px;
}

.pfoot-style {
  flex: none;
  height: 25px;
  margin-top: 46px;
  gap: 11px;
  padding-right: 27px;
  border-top: 1px solid #3f3f3f;
}

/* styles */
.styles {
  display: grid;
  grid-template-columns: repeat(11, 30px);
  grid-auto-rows: 30px;
  gap: 2px;
  height: 123px;
  margin-top: 5px;
  padding-left: 0;
}

.cell {
  display: flex;
  align-items: center;
  justify-content: center;
  background: #4e4e4e;
}

.thumb {
  width: 15px;
  height: 15px;
}

.t1 { position: relative; background: #fff; border: 1px solid #000; }
.t1::after { content: ""; position: absolute; left: -6px; top: 5px; width: 25px; height: 2px; background: #b01030; transform: rotate(45deg); }
.t2 { background: #505050; box-shadow: 0 5px 6px #2a2a2a; }
.t3 { background: linear-gradient(#7fdcf0, #30b0e0); }
.t4 { background: radial-gradient(#0e2030 8%, #cdeefa 14%, #3aa8d0); }
.t5 { background: radial-gradient(#0e2030 8%, #d8f4ff 14%, #fff 70%, #8cc8e8); }
.t6 { background: linear-gradient(90deg, #f8e060, #fff 40%, #40c0ff 60%, #c040e0); }
.t7 { background: linear-gradient(90deg, #e04040, #f0d020, #30c040, #30a0e0, #e020c0); }
.t8 { background: linear-gradient(#0000, #000), linear-gradient(90deg, #f00, #ff0, #0f0, #0ff, #00f, #f0f); }
.t9 { background: linear-gradient(135deg, #fff, #e01020 40%, #000); }
.t10 { background: #535353; box-shadow: 0 0 2px #3a3a3a; }
.t11 { background: #505050; border-right: 1px solid #3c3c3c; border-bottom: 1px solid #3c3c3c; }
.t12 { background: radial-gradient(#ff2000 20%, #ffa000 38%, #d0108a 60%, #10109a 82%); }
.t13 { width: 20px; height: 20px; background: #4f4f4f; border: 2px solid #bcbca0; border-radius: 3px; }
.t14 { background: radial-gradient(circle at 50% 10%, #e8e8e8, #333 60%, #111); }
.t15 { background: linear-gradient(135deg, #bde4ff, #1f7fd0 55%, #0a4f9a); }
.t16 { background: #a0a0a0; }
.t17 { background: repeating-linear-gradient(#222 0 2px, #999 2px 4px, #555 4px 6px); }
.t18 { background: #5f5238; }
.t19 { background: linear-gradient(#3f2a10, #9a8a64); }
.t20 { background: linear-gradient(#201060, #e04050 35% 65%, #201060); }
.t21 { background: repeating-conic-gradient(#c01040 0 25%, #201030 0 50%, #c0a030 0 70%); }
.t22 { background: radial-gradient(#7a7000 30%, #ffd000 55%, #e06000); }
.t23 { background: linear-gradient(135deg, #d0a050, #40b080 50%, #3060c0); }
.t24 { background: linear-gradient(#5ea4dc, #eef6ff); }
.t25 { background: linear-gradient(#3080e0, #e8f0ff 45%, #d09020 55%, #40300a 85%); }
.t26 { background: repeating-conic-gradient(#c8c8c8 0 25%, #707070 0 50%) 0 0 / 4px 4px; }
.t27 { background: linear-gradient(#8070c0, #c07090 60%, #402030 85%, #111); }

/* layers */
.lrow {
  display: flex;
  align-items: center;
  flex: none;
  height: 30px;
  border-bottom: 1px solid #424242;
  padding-left: 3px;
}

.lrow-filter {
  height: 34px;
  padding-top: 5px;
}

.lrow-lock {
  padding-bottom: 2px;
}

.sel-filter {
  justify-content: flex-start;
  width: 87px;
  height: 22px;
  padding: 0 7px;
  gap: 3px;
}

.sel-filter .chev {
  margin-left: auto;
}

.filter-icons {
  display: flex;
  align-items: center;
  gap: 10px;
  margin-left: 15px;
}

.filter-t {
  width: 14px;
  font: bold 15px "Liberation Serif", serif;
  text-align: center;
  color: #d0d0d0;
}

.toggle {
  width: 10px;
  height: 19px;
  margin-left: 5px;
  border-radius: 5px;
  background: #3c3c3c;
  box-shadow: inset 0 7px 0 0 #ddd;
}

.sel-blend {
  width: 118px;
  height: 22px;
  padding: 0 7px 0 9px;
}

.lab {
  margin-left: 8px;
  color: #d0d0d0;
}

.combo {
  display: flex;
  align-items: center;
  height: 20px;
  margin-left: 5px;
  width: 54px;
  background: #424242;
  border: 1px solid #5c5c5c;
  border-radius: 2px;
}

.combo b {
  width: 38px;
  font-weight: normal;
  font-size: 11px;
  text-align: center;
  border-right: 1px solid #5c5c5c;
  line-height: 18px;
}

.combo .chev {
  margin: -3px 0 0 5px;
}

.lrow-lock .lab:first-child {
  margin-left: 5px;
}

.lock-icons {
  display: flex;
  align-items: center;
  gap: 9px;
  margin: 0 -3px 0 8px;
  color: #cfcfcf;
}

.lock-check {
  width: 11px;
  height: 11px;
  background: repeating-conic-gradient(#bbb 0 25%, #555 0 50%) 0 0 / 6px 6px;
}

.layers {
  display: flex;
  height: 102px;
  overflow: hidden;
}

.layer-list {
  width: 355px;
}

.layer {
  display: flex;
  height: 41px;
  border-bottom: 1px solid #3f3f3f;
}

.eye {
  width: 13px;
  height: 10px;
  margin: 15px 8px 0 9px;
  flex: none;
}

.lmain {
  display: flex;
  align-items: center;
  flex: 1;
  border-left: 1px solid #3f3f3f;
}

.layer-on .lmain {
  background: #6a6a6a;
}

.thumb-t {
  width: 36px;
  height: 35px;
  margin-left: 2px;
  background:
    linear-gradient(#eee, #eee) 0 0 / 10px 1px no-repeat,
    linear-gradient(#eee, #eee) 0 0 / 1px 10px no-repeat,
    linear-gradient(#eee, #eee) 100% 0 / 10px 1px no-repeat,
    linear-gradient(#eee, #eee) 100% 0 / 1px 10px no-repeat,
    linear-gradient(#eee, #eee) 0 100% / 10px 1px no-repeat,
    linear-gradient(#eee, #eee) 0 100% / 1px 10px no-repeat,
    linear-gradient(#eee, #eee) 100% 100% / 10px 1px no-repeat,
    linear-gradient(#eee, #eee) 100% 100% / 1px 10px no-repeat;
  color: #d8d8d8;
  font: 20px/35px "Liberation Serif", serif;
  text-align: center;
}

.thumb-c,
.thumb-p {
  flex: none;
  width: 23px;
  height: 31px;
  margin-left: 5px;
  border: 1px solid #222;
  background: repeating-conic-gradient(#c8c8c8 0 25%, #fff 0 50%) 0 0 / 10px 10px;
}

.thumb-p {
  background: #e0deed;
  align-self: flex-start;
  margin-top: 5px;
}

.lname {
  margin-left: 7px;
  color: #f0f0f0;
}

.lname-b {
  margin-left: 9px;
}

.llock {
  margin-left: auto;
  margin-right: 14px;
}

.vscroll-l {
  width: 16px;
  margin: 0;
}

.vscroll-l b {
  margin: 19px 0 10px;
}

.lfoot {
  display: flex;
  align-items: center;
  justify-content: flex-end;
  gap: 13px;
  flex: 1;
  padding-right: 28px;
  border-top: 1px solid #3f3f3f;
}

.fx {
  width: 14px;
  font: italic 14px "Liberation Serif", serif;
  color: #cfcfcf;
}

/* character panel */
.charpanel {
  position: absolute;
  left: 760px;
  top: 92px;
  width: 221px;
  height: 274px;
  background: #535353;
  box-shadow: 0 0 2px #222;
}

.cp-head {
  display: flex;
  align-items: center;
  justify-content: flex-end;
  gap: 11px;
  height: 12px;
  padding-right: 4px;
  background: #4a4a4a;
}

.cp-x {
  color: #bdbdbd;
  font-size: 8px;
  font-weight: bold;
}

.cp-tabs {
  height: 28px;
  border-top: 1px solid #3c3c3c;
}

.cp-tabs .ptab {
  padding: 0 10px;
}

.cp-body {
  padding: 14px 5px 0;
}

.cp-row {
  display: flex;
  align-items: center;
  height: 18px;
  margin-bottom: 4px;
}

.cp-r1 {
  justify-content: space-between;
  margin-bottom: 8px;
  padding-right: 1px;
}

.cp-r5,
.cp-r6 {
  height: 20px;
}

.cp-r6 {
  height: 21px;
  margin-bottom: 7px;
}

.cf {
  position: relative;
  display: block;
  flex: none;
  height: 18px;
  padding-left: 3px;
  background: #424242;
  border: 1px solid #5e5e5e;
  border-radius: 2px;
  font-size: 11px;
  line-height: 16px;
  color: #dcdcdc;
}

.cf em {
  position: absolute;
  top: 0;
  right: 0;
  width: 15px;
  height: 16px;
  border-left: 1px solid #5e5e5e;
  background: #4a4a4a;
}

.cf em::after {
  content: "";
  position: absolute;
  left: 4px;
  top: 4px;
  width: 5px;
  height: 5px;
  border-right: 1px solid #a8a8a8;
  border-bottom: 1px solid #a8a8a8;
  transform: rotate(45deg);
}

.w118 { width: 119px; font-size: 12px; background: #4a4a4a; }
.w72 { width: 73px; padding-left: 8px; }
.w84 { width: 84px; }
.w77 { width: 77px; }
.w55 { width: 55px; height: 20px; padding-left: 4px; line-height: 18px; }

.cp-r6 .w55 {
  height: 21px;
  line-height: 19px;
  margin-left: 1px;
}

.ci {
  flex: none;
  width: 20px;
  text-align: center;
  color: #d0d0d0;
  font: bold 17px/18px "Liberation Serif", serif;
  white-space: nowrap;
}

.ci small {
  font-size: 9px;
}

.ci-lead {
  display: flex;
  align-items: center;
  width: 25px;
  margin: 0 4px 0 8px;
  font-size: 9px;
  line-height: 9px;
  font-weight: normal;
}

.ci-lead b {
  font: 11px "Noto Sans", sans-serif;
}

.ci-va {
  font: 11px/18px "Liberation Sans", sans-serif;
}

.ci-vab {
  width: 19px;
  margin: 0 6px 0 10px;
  font: bold 10px/12px "Liberation Sans", sans-serif;
  background: #ccc;
  color: #444;
}

.ci-jp {
  font: 11px/18px "Noto Sans CJK SC", sans-serif;
}

.ci-wide {
  width: 24px;
  margin-left: 56px;
  font-size: 18px;
  border-bottom: 1px solid #d0d0d0;
  line-height: 17px;
}

.ci-base {
  font: 12px/18px "Liberation Sans", sans-serif;
}

.cp-lab {
  margin-left: 44px;
  color: #d0d0d0;
  width: 36px;
  white-space: nowrap;
}

.cp-color {
  width: 56px;
  height: 21px;
  border: 1px solid #2b3f55;
  background: #4a8ccc;
}

.cp-types {
  display: grid;
  grid-template-columns: repeat(8, 24px);
  justify-items: center;
  align-items: center;
  height: 18px;
  padding-left: 10px;
  margin-bottom: 10px;
  color: #cfcfcf;
  font: bold 15px/18px "Liberation Serif", serif;
}

.cp-types small { font-size: 9px; }
.cp-types sup,
.cp-types sub { font-size: 8px; line-height: 0; }
.cp-types .i { font-style: italic; font-weight: normal; }
.cp-types .u { text-decoration: underline; }
.cp-types .s { text-decoration: line-through; }

.cp-lig {
  color: #828282;
  font-weight: normal;
  font-size: 16px;
  margin-bottom: 5px;
}

.cp-r9 {
  height: 22px;
}

.sel-lang {
  width: 120px;
  height: 22px;
  padding: 0 6px 0 8px;
}

.cp-aa {
  width: 25px;
  text-align: center;
  font: 11px "Liberation Sans", sans-serif;
  color: #cfcfcf;
}

.sel-aa {
  width: 66px;
  height: 22px;
  padding: 0 6px 0 8px;
}

/* ime and speed float */
.ime {
  position: absolute;
  left: 1114px;
  top: 174px;
  display: flex;
  align-items: center;
  width: 198px;
  height: 22px;
  background: #fff;
}

.ime-s {
  position: absolute;
  left: -6px;
  top: -2px;
  width: 26px;
  height: 24px;
  border-radius: 5px;
  background: #ef5a23;
  color: #fff;
  font: italic bold 20px/24px "Liberation Sans", sans-serif;
  text-align: center;
  transform: rotate(-14deg);
}

.ime-t {
  margin-left: 25px;
  color: #2b74b8;
  font-size: 14px;
  font-weight: bold;
  line-height: 22px;
}

.ime-p {
  margin-left: 6px;
  width: 23px;
  font-size: 12px;
}

.ime-ic {
  width: 17px;
  height: 17px;
  margin-right: 5px;
}

.ime-grid {
  position: absolute;
  right: 3px;
  top: 4px;
  width: 14px;
  height: 14px;
}

.speed {
  position: absolute;
  left: 1239px;
  top: 129px;
  width: 66px;
  height: 66px;
  padding-top: 10px;
  border-radius: 50%;
  background:
    radial-gradient(closest-side, #fff 0 60%, #eef7f0 86%, transparent 87%),
    conic-gradient(#3ccb70 0 72%, #bdbdbd 72%);
  text-align: center;
  color: #333;
}

.speed-pct {
  font: 300 25px/26px "Roboto", "Liberation Sans", sans-serif;
}

.speed-pct small {
  font-size: 12px;
}

.speed-net {
  font: 9px/12px "Liberation Sans", sans-serif;
}

.speed-net b {
  color: #2a9a50;
}

/* recording overlays */
.click-spot {
  position: absolute;
  left: 211px;
  top: 580px;
  width: 80px;
  height: 80px;
  border-radius: 50%;
  background: rgba(200, 140, 30, 0.55);
}

.cursor {
  position: absolute;
  left: 250px;
  top: 620px;
  width: 13px;
  height: 19px;
}

.rec-time {
  position: absolute;
  left: 106px;
  top: 665px;
  width: 49px;
  height: 49px;
  border-radius: 50%;
  border: 3px solid rgba(110, 130, 150, 0.35);
  background: rgba(80, 110, 150, 0.3);
  color: rgba(90, 100, 115, 0.9);
  font: 12px/43px "Liberation Sans", sans-serif;
  text-align: center;
}

.watermark {
  position: absolute;
  left: 1102px;
  top: 649px;
  color: rgba(255, 255, 255, 0.3);
  pointer-events: none;
  white-space: nowrap;
}

.wm-a {
  font-size: 19px;
  line-height: 23px;
  letter-spacing: 1.3px;
}

.wm-b {
  font-size: 15px;
  line-height: 23px;
}
```
